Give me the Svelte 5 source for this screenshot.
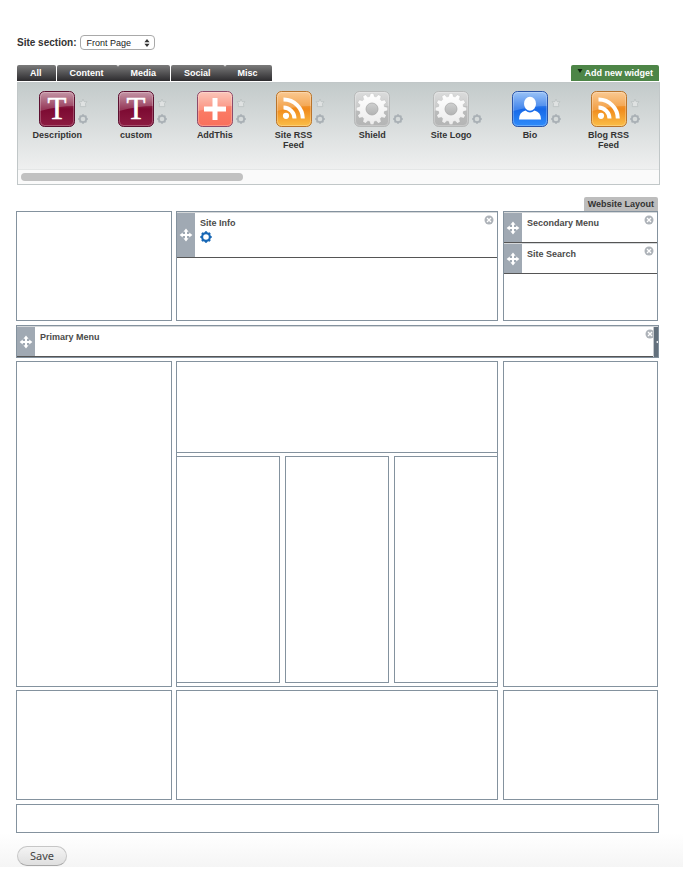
<script>
  const tabs = ['All', 'Content', 'Media', 'Social', 'Misc'];
  const items = [
    { name: 'Description', kind: 'text', star: true },
    { name: 'custom', kind: 'text', star: true },
    { name: 'AddThis', kind: 'plus', star: true },
    { name: 'Site RSS Feed', kind: 'rss', star: true },
    { name: 'Shield', kind: 'gear', star: false },
    { name: 'Site Logo', kind: 'gear', star: false },
    { name: 'Bio', kind: 'person', star: true },
    { name: 'Blog RSS Feed', kind: 'rss', star: true }
  ];
  const palette = {
    text: ['#b87e92', '#7d0a32', '#8c1c42', '#5c1030'],
    plus: ['#fbb9aa', '#fb7c66', '#f9705c', '#8c4a6a'],
    rss: ['#f9bd78', '#f08a1c', '#fbbf48', '#b8742c'],
    gear: ['#d3d4d4', '#bcbdbd', '#b4b5b5', '#b8baba'],
    person: ['#84b6f5', '#1668e8', '#2f8cfb', '#2b55a8']
  };

  // Outline of a cog centred on (c, c)
  function cog(c, teeth, outer, inner) {
    const pts = [];
    const step = (Math.PI * 2) / teeth;
    for (let i = 0; i < teeth; i++) {
      for (const [f, r] of [[-0.36, inner], [-0.18, outer], [0.18, outer], [0.36, inner]]) {
        const a = (i + f) * step - Math.PI / 2;
        pts.push(`${(c + r * Math.cos(a)).toFixed(2)} ${(c + r * Math.sin(a)).toFixed(2)}`);
      }
    }
    return `M${pts.join('L')}Z`;
  }
  const bigCog = cog(18, 12, 15.6, 12.6);
  const smallCog = cog(6, 8, 5.8, 4.9);

  let active = $state('All');
  let section = $state('Front Page');
</script>

{#snippet hub(color)}
  <svg viewBox="0 0 12 12" aria-hidden="true">
    <path d={smallCog + 'M6 3.2a2.8 2.8 0 1 0 0 5.6a2.8 2.8 0 1 0 0-5.6Z'} fill={color} fill-rule="evenodd" />
  </svg>
{/snippet}

{#snippet widget(name, settings)}
  <article class="widget" class:tall={settings}>
    <button class="handle" aria-label="Move {name}">
      <svg viewBox="0 0 14 14" aria-hidden="true">
        <path d="M7 2V12M2 7H12" stroke="#fff" stroke-width="2" />
        <path d="M7 .6 9.6 3.8H4.4ZM7 13.4 9.6 10.2H4.4ZM.6 7 3.8 4.4V9.6ZM13.4 7 10.2 4.4V9.6Z" fill="#fff" />
      </svg>
    </button>
    <div class="body">
      <span>{name}</span>
      {#if settings}
        <button class="cog" aria-label="Settings for {name}">{@render hub('#1767b5')}</button>
      {/if}
    </div>
    <button class="close" aria-label="Remove {name}">
      <svg viewBox="0 0 10 10" aria-hidden="true">
        <circle cx="5" cy="5" r="4.5" fill="#aeb3b9" />
        <path d="M3 3 7 7M7 3 3 7" stroke="#fff" stroke-width="1.3" />
      </svg>
    </button>
  </article>
{/snippet}

<main>
  <div class="section">
    <label for="section">Site section:</label>
    <div class="pick">
      <select id="section" bind:value={section}>
        <option>Front Page</option>
      </select>
      <svg viewBox="0 0 6 8" aria-hidden="true"><path d="M3 0 5.6 3.3H.4ZM3 8 5.6 4.7H.4Z" fill="#333" /></svg>
    </div>
  </div>

  <div class="bar">
    <nav>
      {#each tabs as tab}
        <button class="tab" onclick={() => (active = tab)} aria-pressed={active === tab}>{tab}</button>
      {/each}
    </nav>
    <button class="add">
      <svg viewBox="0 0 6 5" aria-hidden="true"><path d="M.5 0H5.5L3 4Z" fill="#10260f" /></svg>
      Add new widget
    </button>
  </div>

  <section class="panel">
    <ul>
      {#each items as item, i}
        <li>
          <div class="tools">
            <svg class="badge" viewBox="0 0 36 36" aria-hidden="true">
              <defs>
                <linearGradient id="fill{i}" x2="0" y2="1">
                  <stop offset="0" stop-color={palette[item.kind][0]} />
                  <stop offset=".5" stop-color={palette[item.kind][1]} />
                  <stop offset="1" stop-color={palette[item.kind][2]} />
                </linearGradient>
                <linearGradient id="metal{i}" x2="0" y2="1">
                  <stop offset="0" stop-color="#fff" />
                  <stop offset="1" stop-color="#ececec" />
                </linearGradient>
                <linearGradient id="bore{i}" x2="0" y2="1">
                  <stop offset="0" stop-color="#cfd0d0" />
                  <stop offset="1" stop-color="#b2b3b3" />
                </linearGradient>
              </defs>
              <rect x=".5" y=".5" width="35" height="35" rx="5" fill="url(#fill{i})" stroke={palette[item.kind][3]} />
              <path d="M1 20V6Q1 1 6 1H30Q35 1 35 6V15Q20 15 1 20Z" fill="#fff" fill-opacity=".2" />
              <rect x="1.5" y="1.5" width="33" height="33" rx="4" fill="none" stroke="#fff" stroke-opacity=".25" />
              {#if item.kind === 'text'}
                <text class="serif" x="18" y="28" text-anchor="middle">T</text>
              {:else if item.kind === 'plus'}
                <path d="M15.5 7H20.5V15.5H29V20.5H20.5V29H15.5V20.5H7V15.5H15.5Z" fill="#fff" />
              {:else if item.kind === 'rss'}
                <circle cx="10" cy="24.8" r="3.1" fill="#fff" />
                <path d="M7.5 16.6A11 11 0 0 1 18.5 27.6M7.5 8.6A19 19 0 0 1 26.8 27.6" fill="none" stroke="#fff" stroke-width="4" />
              {:else if item.kind === 'gear'}
                <path d={bigCog} fill="url(#metal{i})" stroke="#999" stroke-opacity=".35" stroke-width=".5" />
                <circle cx="18" cy="18" r="6" fill="url(#bore{i})" stroke="#a9aaaa" stroke-width=".8" />
              {:else}
                <ellipse cx="18" cy="12.8" rx="6" ry="7" fill="#fff" />
                <path d="M7 28.5Q7 21 13.5 19.5Q18 23.5 22.5 19.5Q29 21 29 28.5Z" fill="#fff" />
              {/if}
            </svg>
            <div class="side">
              {#if item.star}
                <button aria-label="Favourite {item.name}">
                  <svg viewBox="0 0 10 10" aria-hidden="true">
                    <path d="M5 1 6 3.6H9L7.4 5.6 7.8 8.6H2.2L2.6 5.6 1 3.6H4Z" fill="#dfe2e2" stroke="#b4babb" stroke-width=".6" />
                  </svg>
                </button>
              {/if}
              <button aria-label="Configure {item.name}">{@render hub('#a9b0b5')}</button>
            </div>
          </div>
          <span class="name">{item.name}</span>
        </li>
      {/each}
    </ul>
    <div class="track"><div class="thumb"></div></div>
  </section>

  <div class="heading"><h2>Website Layout</h2></div>

  <div class="row short">
    <div class="box"></div>
    <div class="box">{@render widget('Site Info', true)}</div>
    <div class="box last">
      {@render widget('Secondary Menu', false)}
      {@render widget('Site Search', false)}
    </div>
  </div>

  <div class="box primary">
    {@render widget('Primary Menu', false)}
    <button class="drawer" aria-label="Open drawer">
      <svg viewBox="0 0 3 4" aria-hidden="true"><path d="M3 0V4L0 2Z" fill="#fff" /></svg>
    </button>
  </div>

  <div class="row long">
    <div class="box"></div>
    <div class="box nest">
      <div class="upper"></div>
      <div class="thirds">
        <div class="box"></div>
        <div class="box"></div>
        <div class="box"></div>
      </div>
    </div>
    <div class="box last"></div>
  </div>

  <div class="row short">
    <div class="box"></div>
    <div class="box"></div>
    <div class="box last"></div>
  </div>

  <div class="box foot"></div>
  <div class="actions"><button class="save">Save</button></div>
</main>

<style>
  :global(body) {
    background: #fff;
  }
  main {
    padding: 35px 24px 0 16px;
    font: bold 9px/10px 'Liberation Sans', Arial, sans-serif;
    color: #333;
  }
  main * {
    box-sizing: border-box;
  }
  svg {
    display: block;
  }
  button {
    margin: 0;
    padding: 0;
    border: 0;
    background: none;
    font: inherit;
    color: inherit;
    cursor: pointer;
  }

  .section {
    display: flex;
    align-items: center;
    gap: 4px;
    padding-left: 1px;
    height: 15px;
    margin-bottom: 15px;
  }
  .section label {
    font-size: 10px;
  }
  .pick {
    position: relative;
  }
  select {
    display: block;
    appearance: none;
    width: 75px;
    height: 15px;
    padding: 0 14px 0 5px;
    border: 1px solid #a9a9a9;
    border-radius: 4px;
    background: #fff;
    font: 9px/14px 'Liberation Sans', Arial, sans-serif;
    color: #222;
  }
  .pick svg {
    position: absolute;
    right: 5px;
    top: 4px;
    width: 6px;
    height: 8px;
    pointer-events: none;
  }

  .bar {
    display: flex;
    justify-content: space-between;
    height: 16px;
    padding-left: 1px;
    margin-bottom: 1px;
  }
  nav {
    display: flex;
  }
  .tab {
    height: 16px;
    padding: 0 14px 0 13px;
    border-radius: 2px 2px 0 0;
    background: linear-gradient(#7b7b7b, #2c2b2e);
    color: #fff;
  }
  .tab:nth-child(odd):not(:last-child) {
    margin-right: 1px;
  }
  .add {
    display: flex;
    align-items: center;
    gap: 2px;
    height: 16px;
    padding: 0 6px;
    border-radius: 2px 2px 0 0;
    background: #4d8547;
    color: #fff;
  }
  .add svg {
    width: 6px;
    height: 5px;
    margin-bottom: 3px;
  }

  .panel {
    margin: 0 -1px 0 1px;
    border: 1px solid #c1c7c8;
    background: linear-gradient(#c3caca, #eff0f0 87px);
  }
  ul {
    display: flex;
    height: 86px;
    margin: 0;
    padding: 8px 11px 0 0;
    list-style: none;
  }
  li {
    flex: 1;
    min-width: 0;
    text-align: center;
  }
  .tools {
    display: grid;
    grid-template-columns: 1fr 36px 1fr;
    margin-bottom: 3px;
  }
  .badge {
    grid-column: 2;
    width: 36px;
    height: 36px;
  }
  .serif {
    font: 31px 'Liberation Serif', 'Times New Roman', serif;
    fill: #fff;
    stroke: #fff;
    stroke-width: 0.5px;
  }
  .side {
    display: flex;
    flex-direction: column;
    justify-content: flex-end;
    gap: 6px;
    padding: 0 0 3px 3px;
  }
  .side button {
    width: 10px;
  }
  .side svg {
    width: 10px;
    height: 10px;
  }
  .name {
    display: block;
    padding: 0 12px;
  }
  .track {
    height: 15px;
    padding: 3px;
    border-top: 1px solid #e4e6e6;
    background: #fafafa;
  }
  .thumb {
    width: 35%;
    height: 8px;
    border-radius: 4px;
    background: #c1c1c1;
  }

  .heading {
    display: flex;
    justify-content: flex-end;
    padding: 12px 1px 0 0;
  }
  h2 {
    margin: 0;
    padding: 2px 4px;
    border-radius: 2px 2px 0 0;
    background: #bdbdbd;
    font: inherit;
  }

  .row {
    display: grid;
    grid-template-columns: 156px 1fr 156px;
    column-gap: 4px;
    margin: 0 1px 4px 0;
  }
  .short {
    grid-auto-rows: 110px;
  }
  .long {
    grid-auto-rows: 326px;
    margin-bottom: 3px;
  }
  .last {
    margin-left: 1px;
  }
  .box {
    border: 1px solid #84929e;
  }
  .primary {
    margin-bottom: 3px;
    position: relative;
  }
  .drawer {
    display: grid;
    place-items: center end;
    position: absolute;
    right: 0;
    top: 1px;
    bottom: 0;
    width: 5px;
    border-left: 1px solid #c5c9cd;
    background: #63707c;
  }
  .drawer svg {
    width: 2px;
    height: 4px;
  }

  .widget {
    display: flex;
    align-items: stretch;
    height: 31px;
    border-top: 1px solid #d5d8da;
    border-bottom: 1px solid #555;
    color: #4a4a4a;
  }
  .tall {
    height: 46px;
  }
  .handle {
    display: grid;
    place-items: center;
    width: 18px;
    background: #a0a9b3;
  }
  .handle svg {
    width: 14px;
    height: 14px;
  }
  .body {
    flex: 1;
    padding: 5px;
  }
  .body span {
    display: block;
  }
  .cog {
    margin-top: 3px;
  }
  .cog svg {
    width: 12px;
    height: 12px;
  }
  .close {
    align-self: flex-start;
    padding: 2px 3px 0 0;
  }
  .close svg {
    width: 10px;
    height: 10px;
  }

  .nest {
    display: flex;
    flex-direction: column;
    padding-bottom: 3px;
  }
  .upper {
    height: 91px;
    margin-bottom: 3px;
    border-bottom: 1px solid #84929e;
  }
  .thirds {
    flex: 1;
    display: grid;
    grid-template-columns: repeat(3, 1fr);
    column-gap: 5px;
    margin: 0 -1px;
  }

  .foot {
    height: 29px;
  }
  .actions {
    height: 34px;
    margin: 0 -24px 0 -16px;
    padding: 13px 0 0 17px;
    background: linear-gradient(#fff, #f5f5f5);
  }
  .save {
    display: block;
    height: 20px;
    padding: 0 12px;
    border: 1px solid #c6c6c6;
    border-bottom-color: #a8a8a8;
    border-radius: 10px;
    background: linear-gradient(#f4f4f4, #dfdfdf);
    font: 11px/18px 'Noto Sans', 'Open Sans', sans-serif;
    color: #444;
  }
</style>
